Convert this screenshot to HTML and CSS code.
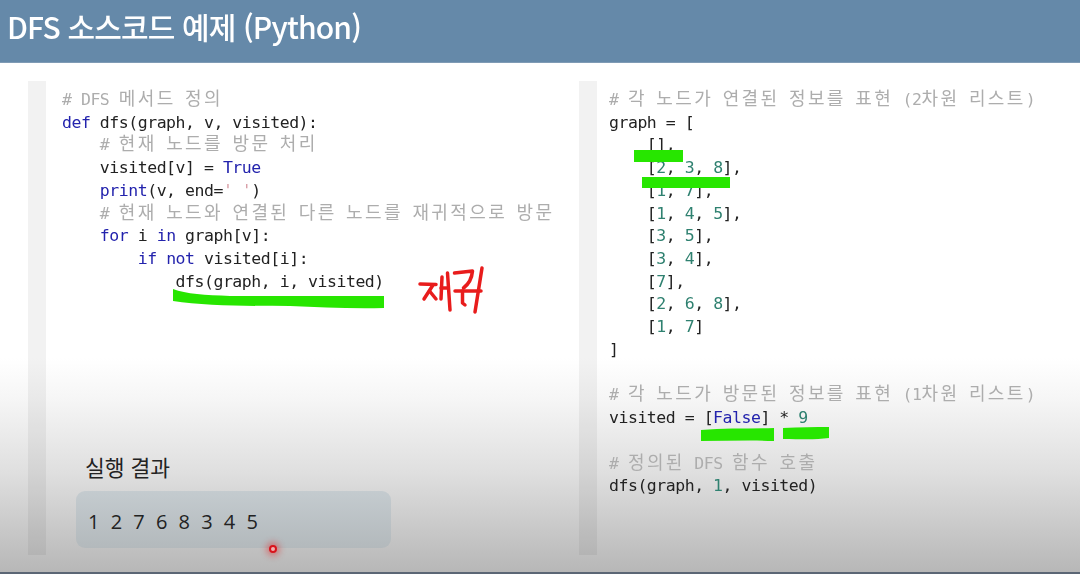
FILE: index.html
```html
<!DOCTYPE html>
<html lang="ko">
<head>
<meta charset="utf-8">
<title>DFS 소스코드 예제 (Python)</title>
<link rel="stylesheet" href="styles.css">
</head>
<body>
<div class="slide">
  <header class="title-bar"><h1>DFS 소스코드 예제 (Python)</h1></header>
  <main class="content">
    <section class="panel panel-left">
      <div class="gutter"></div>
      <div class="panel-body">
<pre class="code"><span class="c"># DFS <span class="k">메서드</span> <span class="k">정의</span></span>
<span class="b">def</span> dfs(graph, v, visited):
    <span class="c"># <span class="k">현재</span> <span class="k">노드를</span> <span class="k">방문</span> <span class="k">처리</span></span>
    visited[v] = <span class="b">True</span>
    <span class="b">print</span>(v, end=<span class="s">' '</span>)
    <span class="c"># <span class="k">현재</span> <span class="k">노드와</span> <span class="k">연결된</span> <span class="k">다른</span> <span class="k">노드를</span> <span class="k">재귀적으로</span> <span class="k">방문</span></span>
    <span class="b">for</span> i <span class="b">in</span> graph[v]:
        <span class="b">if</span> <span class="b">not</span> visited[i]:
            dfs(graph, i, visited)</pre>
        <div class="result">
          <h2>실행 결과</h2>
          <div class="result-box">1 2 7 6 8 3 4 5</div>
        </div>
      </div>
    </section>
    <section class="panel panel-right">
      <div class="gutter"></div>
      <div class="panel-body">
<pre class="code"><span class="c"># <span class="k">각</span> <span class="k">노드가</span> <span class="k">연결된</span> <span class="k">정보를</span> <span class="k">표현</span> (2<span class="k">차원</span> <span class="k">리스트</span>)</span>
graph = [
    [],
    [<span class="n">2</span>, <span class="n">3</span>, <span class="n">8</span>],
    [<span class="n">1</span>, <span class="n">7</span>],
    [<span class="n">1</span>, <span class="n">4</span>, <span class="n">5</span>],
    [<span class="n">3</span>, <span class="n">5</span>],
    [<span class="n">3</span>, <span class="n">4</span>],
    [<span class="n">7</span>],
    [<span class="n">2</span>, <span class="n">6</span>, <span class="n">8</span>],
    [<span class="n">1</span>, <span class="n">7</span>]
]

<span class="c"># <span class="k">각</span> <span class="k">노드가</span> <span class="k">방문된</span> <span class="k">정보를</span> <span class="k">표현</span> (1<span class="k">차원</span> <span class="k">리스트</span>)</span>
visited = [<span class="b">False</span>] * <span class="n">9</span>

<span class="c"># <span class="k">정의된</span> DFS <span class="k">함수</span> <span class="k">호출</span></span>
dfs(graph, <span class="n">1</span>, visited)</pre>
      </div>
    </section>
  </main>
  <div class="bottom-line"></div>
  <svg class="ink" viewBox="0 0 1080 574" aria-hidden="true">
    <g class="marker">
      <path d="M173 289C186 294 205 295 230 296L384 296V308C350 309 320 307 290 306C250 306 205 306 173 301Z"/>
      <path d="M634 150H683V162H634Z"/>
      <path d="M642 177H730V188H642Z"/>
      <path d="M701 430C725 428 750 429 774 428V441C750 440 725 441 701 441Z"/>
      <path d="M783 428C800 427 815 427 829 427V438C815 440 800 439 783 439Z"/>
    </g>
    <g class="pen">
      <path d="M420 284L436 284.5"/>
      <path d="M433 285L424 299"/>
      <path d="M429.5 291L436 299"/>
      <path d="M442 277L441 299"/>
      <path d="M441 288L448 288"/>
      <path d="M447.5 273L450 310"/>
      <path d="M454.5 273L472.5 271C472 277 470 283 463.5 288"/>
      <path d="M455 291L481 291"/>
      <path d="M462.5 291L462.5 303L465 305"/>
      <path d="M482 268L475 312"/>
    </g>
  </svg>
  <div class="cursor-dot"></div>
</div>
</body>
</html>
```
FILE: styles.css
```css
* { box-sizing: border-box; }
html, body { margin: 0; padding: 0; }
body { width: 1080px; height: 574px; overflow: hidden; background: #fff; }
.slide {
  position: relative;
  width: 1080px;
  height: 574px;
  display: flex;
  flex-direction: column;
  font-family: "Noto Sans CJK KR", "Noto Sans", sans-serif;
}
.title-bar {
  height: 63px;
  flex: none;
  padding-left: 7px;
  display: flex;
  align-items: center;
  background: #6589a9;
  border-bottom: 1px solid #7f9bb5;
}
.title-bar h1 {
  margin: 0 0 10px;
  color: #fff;
  font-size: 30px;
  font-weight: 500;
  letter-spacing: -0.85px;
  line-height: 40px;
  filter: blur(0.3px);
}
.content {
  flex: 1;
  min-height: 0;
  display: flex;
  padding: 18px 0 17px 28px;
  background: linear-gradient(180deg, #fff 0, #fff 295px, #f6f6f6 335px, #dfdfdf 410px, #b7b7b7 100%);
}
.panel { display: flex; }
.panel-left { width: 551px; }
.panel-right { flex: 1; }
.gutter { width: 18px; flex: none; background: rgba(0, 0, 0, 0.05); }
.panel-body { flex: 1; display: flex; flex-direction: column; justify-content: space-between; }
.panel-left .panel-body { padding-left: 16px; }
.panel-right .panel-body { padding-left: 12px; }
.code {
  margin: 0;
  padding-top: 8px;
  font-family: "DejaVu Sans Mono", "Noto Sans CJK KR", monospace;
  font-size: 16.5px;
  letter-spacing: -0.47px;
  line-height: 22.72px;
  color: #222;
  filter: blur(0.35px);
}
.c { color: #adadad; }
.b { color: #2323ad; }
.n { color: #2f8170; }
.s { color: #d9a0a8; }
.k {
  font-family: "Noto Sans CJK KR", sans-serif;
  font-size: 18px;
  font-weight: 400;
  letter-spacing: 2.38px;
  line-height: 0;
}
.result { margin-left: 14px; margin-bottom: 7px; }
.result h2 {
  margin: 0 0 9px 9px;
  font-size: 21.5px;
  font-weight: 400;
  line-height: 30px;
  color: #222;
}
.result-box {
  width: 315px;
  height: 57px;
  padding: 3px 0 0 12px;
  display: flex;
  align-items: center;
  border-radius: 9px;
  background: linear-gradient(180deg, #c4cbcf, #b3b9bc);
  font-family: "Open Sans", sans-serif;
  font-size: 20px;
  word-spacing: 6px;
  color: #222;
}
.bottom-line { height: 2px; flex: none; background: #5b6675; }
.ink { position: absolute; inset: 0; width: 1080px; height: 574px; pointer-events: none; }
.marker path { fill: #27e600; }
.pen path { fill: none; stroke: #e81c1c; stroke-width: 3.5; stroke-linecap: round; stroke-linejoin: round; }
.cursor-dot {
  position: absolute;
  left: 269px;
  top: 545px;
  width: 8px;
  height: 8px;
  border-radius: 50%;
  background: #f0b0b0;
  border: 2.5px solid #d8141c;
  box-shadow: 0 0 6px 3px rgba(225, 40, 40, 0.45);
}
```
